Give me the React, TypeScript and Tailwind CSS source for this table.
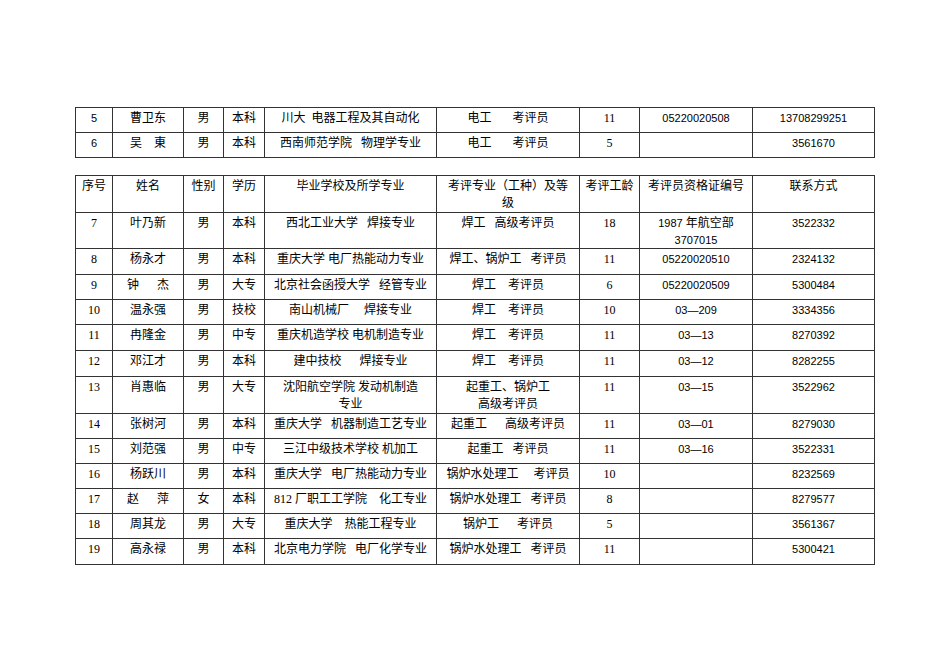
import React from "react";

type Kind = "cjk" | "serif" | "sans";
type Cell = { t: React.ReactNode; k?: Kind };

const COLS = "grid-cols-[36px_70px_39px_40px_171px_142px_59px_112px_121px]";

const S = (t: string): Cell => ({ t, k: "sans" });
const R = (t: string): Cell => ({ t, k: "serif" });
const C = (t: string): Cell => ({ t, k: "cjk" });

function CellView({ c }: { c: Cell }) {
  const base =
    "bg-white text-center pt-[2px] leading-[17px] whitespace-pre text-black overflow-visible";
  if (c.k === "sans")
    return (
      <div className={`${base} text-[11px] font-['Liberation_Sans','Noto_Sans_CJK_SC',sans-serif]`}>
        {c.t}
      </div>
    );
  return (
    <div className={`${base} text-[12px] font-['Liberation_Serif','Noto_Sans_CJK_SC',serif]`}>
      {c.t}
    </div>
  );
}

const table1: Cell[][] = [
  [S("5"), C("曹卫东"), C("男"), C("本科"), C("川大  电器工程及其自动化"), C("电工　   考评员"), R("11"), S("05220020508"), S("13708299251")],
  [S("6"), C("吴　東"), C("男"), C("本科"), C("西南师范学院   物理学专业"), C("电工　   考评员"), R("5"), S(""), S("3561670")],
];

const header: Cell[] = [
  C("序号"),
  C("姓名"),
  C("性别"),
  C("学历"),
  C("毕业学校及所学专业"),
  C("考评专业（工种）及等\n级"),
  C("考评工龄"),
  C("考评员资格证编号"),
  C("联系方式"),
];

const cert7: Cell = {
  t: (
    <>
      <span className="text-[11px] font-['Liberation_Sans',sans-serif]">1987</span> 年航空部
      {"\n"}
      <span className="text-[11px] font-['Liberation_Sans',sans-serif]">3707015</span>
    </>
  ),
  k: "cjk",
};

const table2: Cell[][] = [
  header,
  [R("7"), C("叶乃新"), C("男"), C("本科"), C("西北工业大学   焊接专业"), C("焊工   高级考评员"), R("18"), cert7, S("3522332")],
  [R("8"), C("杨永才"), C("男"), C("本科"), C("重庆大学 电厂热能动力专业"), C("焊工、锅炉工   考评员"), R("11"), S("05220020510"), S("2324132")],
  [R("9"), C("钟　  杰"), C("男"), C("大专"), C("北京社会函授大学   经管专业"), C("焊工　考评员"), R("6"), S("05220020509"), S("5300484")],
  [R("10"), C("温永强"), C("男"), C("技校"), C("南山机械厂     焊接专业"), C("焊工　考评员"), R("10"), S("03—209"), S("3334356")],
  [R("11"), C("冉隆金"), C("男"), C("中专"), C("重庆机造学校 电机制造专业"), C("焊工　考评员"), R("11"), S("03—13"), S("8270392")],
  [R("12"), C("邓江才"), C("男"), C("本科"), C("建中技校　  焊接专业"), C("焊工　考评员"), R("11"), S("03—12"), S("8282255")],
  [R("13"), C("肖惠临"), C("男"), C("大专"), C("沈阳航空学院 发动机制造\n专业"), C("起重工、锅炉工\n高级考评员"), R("11"), S("03—15"), S("3522962")],
  [R("14"), C("张树河"), C("男"), C("本科"), C("重庆大学   机器制造工艺专业"), C("起重工　  高级考评员"), R("11"), S("03—01"), S("8279030")],
  [R("15"), C("刘范强"), C("男"), C("中专"), C("三江中级技术学校 机加工"), C("起重工   考评员"), R("11"), S("03—16"), S("3522331")],
  [R("16"), C("杨跃川"), C("男"), C("本科"), C("重庆大学   电厂热能动力专业"), C("锅炉水处理工     考评员"), R("10"), S(""), S("8232569")],
  [R("17"), C("赵　  萍"), C("女"), C("本科"), C("812 厂职工工学院　化工专业"), C("锅炉水处理工   考评员"), R("8"), S(""), S("8279577")],
  [R("18"), C("周其龙"), C("男"), C("大专"), C("重庆大学　热能工程专业"), C("锅炉工　  考评员"), R("5"), S(""), S("3561367")],
  [R("19"), C("高永禄"), C("男"), C("本科"), C("北京电力学院   电厂化学专业"), C("锅炉水处理工   考评员"), R("11"), S(""), S("5300421")],
];

export default function App() {
  return (
    <div className="w-[950px] h-[672px] bg-white pt-[107px] pl-[75px] overflow-hidden">
      <div className={`grid ${COLS} grid-rows-[24px_24px] gap-px bg-[#333] p-px w-[800px]`}>
        {table1.flat().map((c, i) => (
          <CellView key={i} c={c} />
        ))}
      </div>
      <div
        className={`mt-[17px] grid ${COLS} grid-rows-[36px_35px_25px_24px_24px_25px_25px_36px_24px_24px_24px_24px_24px_25px] gap-px bg-[#333] p-px w-[800px]`}
      >
        {table2.flat().map((c, i) => (
          <CellView key={i} c={c} />
        ))}
      </div>
    </div>
  );
}
